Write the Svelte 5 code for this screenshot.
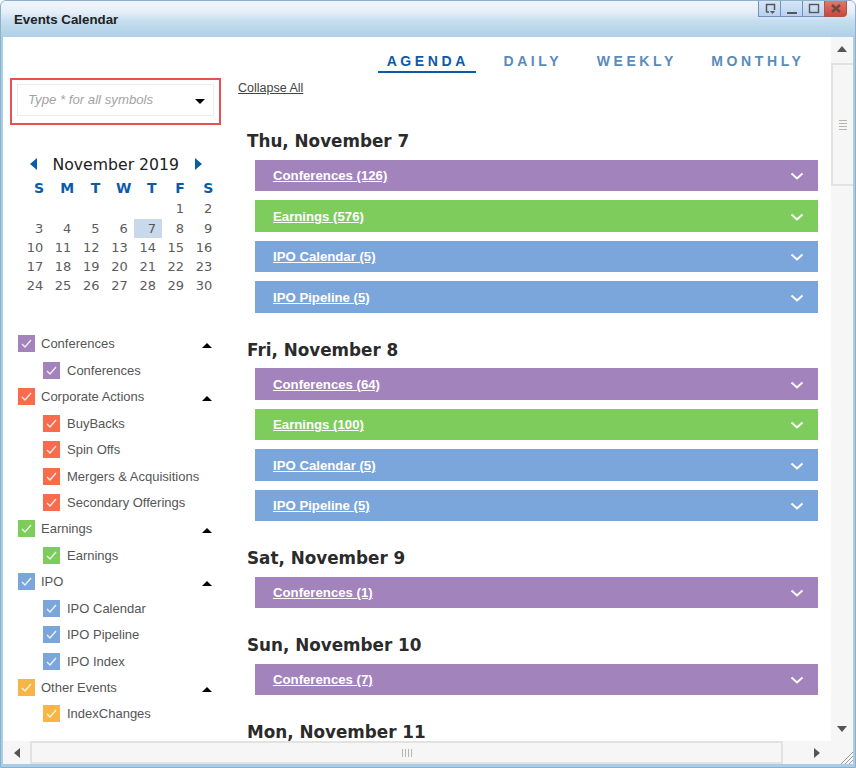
<script>
	const tabs = ['AGENDA', 'DAILY', 'WEEKLY', 'MONTHLY'];
	const weekdays = ['S', 'M', 'T', 'W', 'T', 'F', 'S'];
	const days = [...Array(5).fill(''), ...Array.from({ length: 30 }, (_, i) => i + 1)];

	const filters = [
		{ name: 'Conferences', color: '#a283bc', items: ['Conferences'] },
		{ name: 'Corporate Actions', color: '#f96b4d', items: ['BuyBacks', 'Spin Offs', 'Mergers & Acquisitions', 'Secondary Offerings'] },
		{ name: 'Earnings', color: '#7dcc5c', items: ['Earnings'] },
		{ name: 'IPO', color: '#7ba6dc', items: ['IPO Calendar', 'IPO Pipeline', 'IPO Index'] },
		{ name: 'Other Events', color: '#f6b544', items: ['IndexChanges'] }
	];

	const purple = '#a283bc';
	const green = '#7dcc5c';
	const blue = '#7ba6dc';

	const agenda = [
		{ title: 'Thu, November 7', bars: [['Conferences (126)', purple], ['Earnings (576)', green], ['IPO Calendar (5)', blue], ['IPO Pipeline (5)', blue]] },
		{ title: 'Fri, November 8', bars: [['Conferences (64)', purple], ['Earnings (100)', green], ['IPO Calendar (5)', blue], ['IPO Pipeline (5)', blue]] },
		{ title: 'Sat, November 9', bars: [['Conferences (1)', purple]] },
		{ title: 'Sun, November 10', bars: [['Conferences (7)', purple]] },
		{ title: 'Mon, November 11', bars: [] }
	];
</script>

{#snippet check(color)}
	<span class="check" style="background: {color}">
		<svg width="17" height="17" viewBox="0 0 17 17"><path d="M4 9l3 3 6-7" fill="none" stroke="#fff" stroke-width="1.4" opacity="0.85" /></svg>
	</span>
{/snippet}

<div class="window">
	<header class="titlebar">
		<span class="title">Events Calendar</span>
		<div class="controls">
			<span class="ctl">
				<svg width="14" height="12" viewBox="0 0 14 12"><path d="M3.5 9V1.500h8V7" fill="none" stroke="#555" stroke-width="1.500" /><path d="M3 9h3" stroke="#555" stroke-width="1.500" /><path d="M7 8h5l-2.500 3z" fill="#555" /></svg>
			</span>
			<span class="ctl">
				<svg width="14" height="12" viewBox="0 0 14 12"><path d="M2 10h10" stroke="#555" stroke-width="2" /></svg>
			</span>
			<span class="ctl">
				<svg width="14" height="12" viewBox="0 0 14 12"><rect x="2.500" y="1.500" width="9" height="8" fill="none" stroke="#555" stroke-width="1.400" /></svg>
			</span>
			<span class="ctl close">
				<svg width="14" height="12" viewBox="0 0 14 12"><path d="M3 2l8 7M11 2l-8 7" stroke="#6b4a46" stroke-width="2.400" /></svg>
			</span>
		</div>
	</header>

	<div class="middle">
		<div class="viewport">
			<aside class="sidebar">
				<div class="search-outline">
					<div class="search">
						<span class="placeholder">Type * for all symbols</span>
						<span class="caret-down"></span>
					</div>
				</div>

				<div class="calendar">
					<div class="month">
						<span class="arrow left"></span>
						<span>November 2019</span>
						<span class="arrow right"></span>
					</div>
					<div class="grid">
						{#each weekdays as d}
							<span class="wd">{d}</span>
						{/each}
						{#each days as d}
							<span class="day" class:today={d === 7}>{d}</span>
						{/each}
					</div>
				</div>

				<div class="filters">
					{#each filters as group}
						<div class="row">
							{@render check(group.color)}
							<span class="label">{group.name}</span>
							<span class="caret-up"></span>
						</div>
						{#each group.items as item}
							<div class="row child">
								{@render check(group.color)}
								<span class="label">{item}</span>
							</div>
						{/each}
					{/each}
				</div>
			</aside>

			<main class="content">
				<nav class="tabs">
					{#each tabs as tab, i}
						<span class="tab" class:active={i === 0}>{tab}</span>
					{/each}
				</nav>
				<a class="collapse" href="#top">Collapse All</a>

				{#each agenda as day}
					<section class="day-block">
						<h2>{day.title}</h2>
						{#each day.bars as [label, color]}
							<div class="bar" style="background: {color}">
								<span class="bar-label">{label}</span>
								<svg width="14" height="9" viewBox="0 0 14 9"><path d="M1.500 1.500l5.500 5 5.500-5" fill="none" stroke="#fff" stroke-width="2" /></svg>
							</div>
						{/each}
					</section>
				{/each}
			</main>
		</div>

		<div class="vscroll">
			<span class="sc-btn"><span class="tri-up"></span></span>
			<div class="v-track">
				<div class="v-thumb">
					<span class="grip"></span>
				</div>
			</div>
			<span class="sc-btn"><span class="tri-down"></span></span>
		</div>
	</div>

	<div class="hscroll">
		<span class="h-btn"><span class="tri-left"></span></span>
		<div class="h-thumb"><span class="h-grip"></span></div>
		<span class="h-btn end"><span class="tri-right"></span></span>
		<span class="corner">
			<svg width="13" height="13" viewBox="0 0 13 13"><path d="M1 13L13 1M5 13l8-8M9 13l4-4" stroke="#9a9a9a" stroke-width="1" /></svg>
		</span>
	</div>
</div>

<style>
	:global(body) {
		margin: 0;
		background: #fff;
	}

	.window {
		width: 856px;
		height: 768px;
		box-sizing: border-box;
		display: flex;
		flex-direction: column;
		border: 1px solid #8fb0cc;
		border-top-left-radius: 6px;
		border-top-right-radius: 6px;
		background: #a9cde6;
		padding: 0 2px 3px;
		overflow: hidden;
		font-family: 'Liberation Sans', Arial, sans-serif;
	}

	.titlebar {
		height: 36px;
		flex: none;
		margin: 0 -2px;
		display: flex;
		justify-content: space-between;
		align-items: flex-start;
		background: linear-gradient(#f0f5fb 0, #e6eff8 30%, #c6deef 55%, #aecfe6 100%);
	}

	.title {
		margin: 11px 0 0 13px;
		font-size: 13.300px;
		font-weight: bold;
		color: #222;
	}

	.controls {
		display: flex;
		margin-right: 8px;
	}

	.ctl {
		width: 23px;
		height: 16px;
		box-sizing: border-box;
		border: 1px solid #6f93bd;
		border-top: none;
		margin-left: -1px;
		display: flex;
		align-items: center;
		justify-content: center;
		background: linear-gradient(#d8e6f6, #b7d1f0);
	}

	.ctl.close {
		background: linear-gradient(#dc7a6e, #c9483c);
		border-color: #b0544b;
		border-bottom-right-radius: 4px;
	}

	.middle {
		flex: 1;
		min-height: 0;
		display: flex;
		background: #fff;
	}

	.viewport {
		flex: 1;
		min-width: 0;
		display: flex;
		overflow: hidden;
	}

	.sidebar {
		width: 226px;
		flex: none;
		padding-top: 41px;
		box-sizing: border-box;
	}

	.search-outline {
		width: 211px;
		height: 47px;
		box-sizing: border-box;
		margin-left: 7px;
		border: 2px solid #ea5050;
		padding: 4px 5px 7px;
	}

	.search {
		height: 32px;
		box-sizing: border-box;
		border: 1px solid #ececec;
		display: flex;
		align-items: center;
		justify-content: space-between;
		padding: 0 8px 0 10px;
	}

	.placeholder {
		font-size: 13.200px;
		font-style: italic;
		color: #a3a3a3;
		margin-bottom: 2px;
	}

	.caret-down {
		width: 0;
		height: 0;
		border-left: 5.500px solid transparent;
		border-right: 5.500px solid transparent;
		border-top: 5px solid #000;
		margin-top: 2px;
	}

	.calendar {
		margin: 28px 0 0 18px;
		width: 198px;
	}

	.month {
		display: flex;
		align-items: center;
		gap: 15.500px;
		margin-left: 9px;
		height: 26px;
		font-family: 'DejaVu Sans', Verdana, sans-serif;
		font-size: 15.700px;
		color: #222;
		box-sizing: border-box;
		padding-bottom: 4px;
	}

	.arrow {
		width: 0;
		height: 0;
		border-top: 6.500px solid transparent;
		border-bottom: 6.500px solid transparent;
	}

	.arrow.left {
		border-right: 7px solid #0a5cab;
	}

	.arrow.right {
		border-left: 7px solid #0a5cab;
	}

	.grid {
		display: grid;
		grid-template-columns: repeat(7, 28.200px);
		grid-template-rows: 20.300px;
		grid-auto-rows: 19.300px;
		font-family: 'DejaVu Sans', Verdana, sans-serif;
		font-size: 13px;
	}

	.wd {
		text-align: center;
		font-weight: bold;
		color: #0a5cab;
		font-size: 14px;
		line-height: 19px;
		padding-left: 8px;
	}

	.day {
		text-align: right;
		padding-right: 6px;
		color: #5c5c5c;
		line-height: 19px;
	}

	.day.today {
		background: #c9d9ec;
		color: #555;
	}

	.filters {
		margin-top: 35px;
		padding-left: 15px;
	}

	.row {
		display: flex;
		align-items: center;
		height: 26.430px;
		color: #555;
		font-size: 13px;
	}

	.row.child {
		padding-left: 25px;
	}

	.check {
		width: 17px;
		height: 17px;
		flex: none;
		display: block;
	}

	.check svg {
		display: block;
	}

	.label {
		margin-left: 6px;
		white-space: nowrap;
	}

	.row.child .label {
		margin-left: 7px;
	}

	.caret-up {
		width: 0;
		height: 0;
		margin-left: auto;
		margin-right: 17px;
		margin-top: 4px;
		border-left: 5.500px solid transparent;
		border-right: 5.500px solid transparent;
		border-bottom: 5px solid #000;
	}

	.content {
		flex: 1;
		min-width: 0;
		padding: 0 13px 0 9px;
	}

	.tabs {
		display: flex;
		justify-content: flex-end;
		gap: 34.500px;
		padding: 16px 13.500px 0 0;
		height: 19px;
	}

	.tab {
		height: 19px;
		font-size: 14px;
		font-weight: bold;
		letter-spacing: 3.600px;
		color: #5b8bb8;
		white-space: nowrap;
	}

	.tab.active {
		color: #0a5cab;
		position: relative;
	}

	.tab.active::after {
		content: '';
		position: absolute;
		left: -9px;
		right: -7.500px;
		top: 18px;
		height: 2px;
		background: #0a5cab;
	}

	.collapse {
		display: block;
		width: max-content;
		margin: 9px 0 0 0;
		font-size: 12.500px;
		color: #444;
		line-height: 15px;
	}

	.day-block {
		margin-left: 9px;
	}

	h2 {
		margin: 0;
		padding-top: 29px;
		height: 17.500px;
		line-height: 17.500px;
		font-family: 'DejaVu Sans', Verdana, sans-serif;
		font-size: 16.800px;
		font-weight: bold;
		color: #2b2b2b;
		white-space: nowrap;
	}

	.day-block:first-of-type h2 {
		padding-top: 37.250px;
	}

	.bar {
		margin-top: 9px;
		margin-left: 8px;
		height: 31.500px;
		display: flex;
		align-items: center;
		justify-content: space-between;
		padding: 0 14px 0 18px;
	}

	.bar svg {
		margin-top: 2px;
	}

	.bar-label {
		color: #fff;
		font-size: 13.200px;
		font-weight: bold;
		text-decoration: underline;
	}

	.vscroll {
		width: 22px;
		flex: none;
		display: flex;
		flex-direction: column;
		background: #f6f6f6;
	}

	.sc-btn {
		height: 24px;
		flex: none;
		display: flex;
		align-items: center;
		justify-content: center;
	}

	.tri-up {
		border-left: 5px solid transparent;
		border-right: 5px solid transparent;
		border-bottom: 6px solid #555;
	}

	.tri-down {
		border-left: 5px solid transparent;
		border-right: 5px solid transparent;
		border-top: 6px solid #555;
	}

	.v-track {
		flex: 1;
	}

	.v-thumb {
		height: 123px;
		margin-top: 2px;
		border: 2px solid #e2e2e2;
		border-right: none;
		box-sizing: border-box;
		display: flex;
		align-items: center;
		justify-content: center;
	}

	.grip {
		width: 8px;
		height: 10px;
		background: repeating-linear-gradient(#b5b5ad 0 1px, transparent 1px 3px);
	}

	.hscroll {
		height: 23px;
		flex: none;
		display: flex;
		align-items: stretch;
		background: #f6f6f6;
	}

	.h-btn {
		width: 27px;
		flex: none;
		display: flex;
		align-items: center;
		justify-content: center;
	}

	.h-btn.end {
		width: 50px;
		box-sizing: border-box;
		padding-left: 18px;
	}

	.tri-left {
		border-top: 5px solid transparent;
		border-bottom: 5px solid transparent;
		border-right: 6px solid #555;
	}

	.tri-right {
		border-top: 5px solid transparent;
		border-bottom: 5px solid transparent;
		border-left: 6px solid #555;
	}

	.h-thumb {
		width: 753px;
		flex: none;
		box-sizing: border-box;
		border: 2px solid #e2e2e2;
		display: flex;
		align-items: center;
		justify-content: center;
	}

	.h-grip {
		width: 10px;
		height: 8px;
		background: repeating-linear-gradient(90deg, #b5b5ad 0 1px, transparent 1px 3px);
	}

	.corner {
		flex: 1;
		display: flex;
		align-items: flex-end;
		justify-content: flex-end;
	}
</style>
